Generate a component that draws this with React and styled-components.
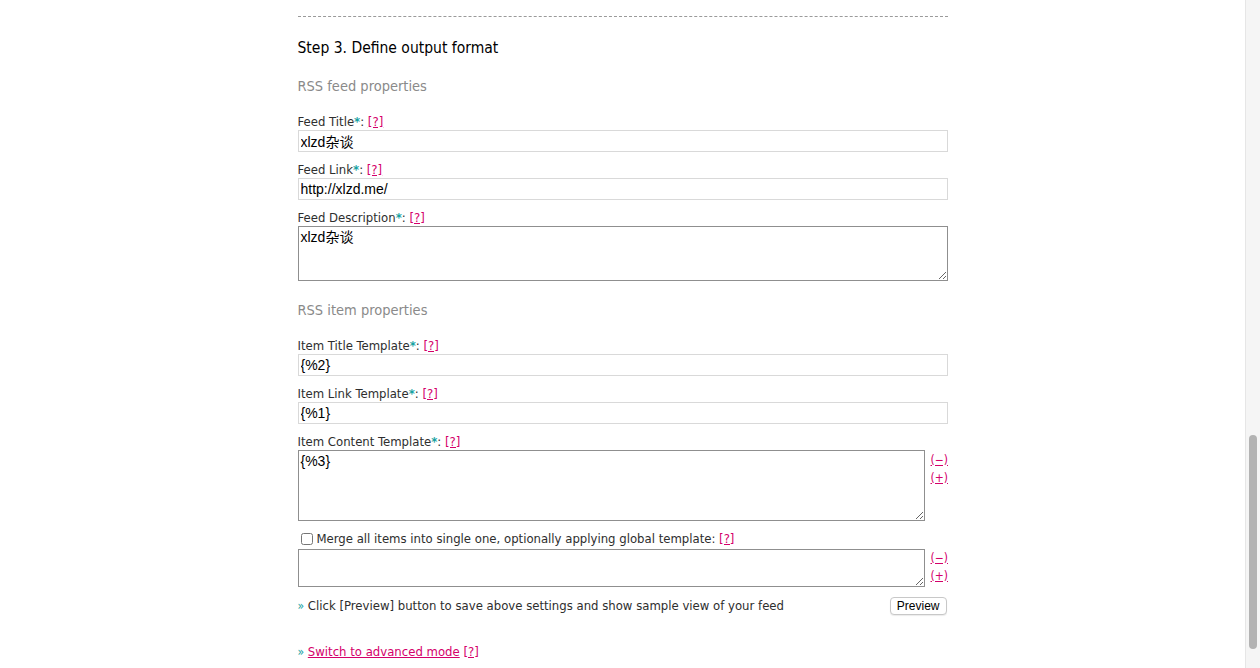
import React from "react";
import styled, { createGlobalStyle } from "styled-components";

const Global = createGlobalStyle`
  html, body { margin: 0; padding: 0; background: #fff; overflow: hidden; }
  body { font-family: Tahoma, "DejaVu Sans Condensed", "DejaVu Sans", sans-serif; color: #2e2e2e; }
`;

const Viewport = styled.div`
  height: 668px;
  padding-right: 15px;
  overflow: hidden;
`;

const Column = styled.div`
  width: 650px;
  margin: 0 auto;
  padding-top: 16px;
  font-size: 13px;
`;

const Divider = styled.hr`
  margin: 0;
  border: 0;
  border-top: 1px dashed #9a9a9a;
`;

const StepTitle = styled.h2`
  margin: 21px 0 0;
  font-size: 15.5px;
  font-weight: normal;
  color: #000;
  line-height: 20px;
`;

const GroupTitle = styled.h3`
  margin: ${(p) => p.$gap || 18}px 0 0;
  font-size: 14.5px;
  font-weight: normal;
  color: #8a8a8a;
  line-height: 20px;
`;

const Field = styled.div`
  margin-top: ${(p) => p.$gap || 9}px;
`;

const Label = styled.label`
  display: block;
  line-height: 17px;
  color: #2e2e2e;
`;

const Req = styled.span`
  color: #17a2a2;
  font-weight: bold;
`;

const Help = styled.a`
  color: #d4006a;
  text-decoration: underline;
`;

const TextInput = styled.input`
  display: block;
  box-sizing: border-box;
  width: 100%;
  height: 22px;
  margin: 0;
  padding: 1px 2px;
  border: 1px solid #d9d9d9;
  font-family: "Liberation Sans", "Noto Sans CJK SC", sans-serif;
  font-size: 14px;
  color: #000;
  background: #fff;
  outline: none;
`;

const TextArea = styled.textarea`
  display: block;
  flex-shrink: 0;
  box-sizing: border-box;
  width: ${(p) => p.$w || "100%"};
  height: ${(p) => p.$h}px;
  margin: 0;
  padding: 2px 2px;
  border: 1px solid #8f8f8f;
  font-family: "Liberation Sans", "Noto Sans CJK SC", sans-serif;
  font-size: 14px;
  line-height: 17px;
  color: #000;
  background: #fff;
  outline: none;
  resize: both;
`;

const AreaRow = styled.div`
  display: flex;
  align-items: flex-start;
  gap: 6px;
`;

const SizeCtl = styled.div`
  display: flex;
  flex-direction: column;
  padding-top: ${(p) => p.$top || 2}px;
  gap: 1px;
`;

const SizeLink = styled.a`
  color: #d4006a;
  font-size: 12px;
  line-height: 17px;
  text-decoration: underline;
`;

const CheckRow = styled.label`
  display: flex;
  align-items: center;
  gap: 4px;
  margin-top: 9px;
  margin-bottom: 2px;
  line-height: 17px;
`;

const Check = styled.input`
  margin: 0 0 0 3px;
  width: 12px;
  height: 12px;
`;

const ActionRow = styled.div`
  display: flex;
  align-items: center;
  justify-content: space-between;
  margin-top: 10px;
`;

const Note = styled.p`
  margin: 0;
  line-height: 17px;
`;

const Mark = styled.span`
  color: #17a2a2;
  font-size: 12px;
`;

const Button = styled.button`
  font-family: "Liberation Sans", sans-serif;
  font-size: 12px;
  height: 18px;
  padding: 0 6px;
  margin-right: 1px;
  border: 1px solid #c8c8c8;
  border-radius: 4px;
  background: #fff;
  color: #000;
  box-shadow: 0 1px 1px rgba(0,0,0,0.08);
`;

const Footer = styled.p`
  margin: 28px 0 0;
  line-height: 17px;
`;

const MainLink = styled.a`
  color: #d4006a;
  text-decoration: underline;
`;

const ScrollTrack = styled.div`
  position: fixed;
  top: 0;
  right: 0;
  width: 15px;
  height: 668px;
  background: #f5f5f5;
  border-left: 1px solid #e6e6e6;
  box-sizing: border-box;
`;

const ScrollThumb = styled.div`
  position: absolute;
  left: 3px;
  width: 8px;
  top: 435px;
  height: 214px;
  border-radius: 4px;
  background: #b3b3b3;
`;

function HelpLink() {
  return <Help href="#">[?]</Help>;
}

function LabelLine({ text }) {
  return (
    <Label>
      {text}
      <Req>*</Req>: <HelpLink />
    </Label>
  );
}

function Resizers({ top }) {
  return (
    <SizeCtl $top={top}>
      <SizeLink href="#">(−)</SizeLink>
      <SizeLink href="#">(+)</SizeLink>
    </SizeCtl>
  );
}

export default function App() {
  return (
    <>
      <Global />
      <Viewport>
        <Column>
          <Divider />
          <StepTitle>Step 3. Define output format</StepTitle>
          <GroupTitle>RSS feed properties</GroupTitle>
          <Field $gap={17}>
            <LabelLine text="Feed Title" />
            <TextInput defaultValue="xlzd杂谈" />
          </Field>
          <Field>
            <LabelLine text="Feed Link" />
            <TextInput defaultValue="http://xlzd.me/" />
          </Field>
          <Field>
            <LabelLine text="Feed Description" />
            <TextArea $h={55} defaultValue="xlzd杂谈" />
          </Field>
          <GroupTitle $gap={19}>RSS item properties</GroupTitle>
          <Field $gap={17}>
            <LabelLine text="Item Title Template" />
            <TextInput defaultValue="{%2}" />
          </Field>
          <Field>
            <LabelLine text="Item Link Template" />
            <TextInput defaultValue="{%1}" />
          </Field>
          <Field>
            <LabelLine text="Item Content Template" />
            <AreaRow>
              <TextArea $w="627px" $h={71} defaultValue="{%3}" />
              <Resizers top={2} />
            </AreaRow>
          </Field>
          <CheckRow>
            <Check type="checkbox" />
            <span>
              Merge all items into single one, optionally applying global template: <HelpLink />
            </span>
          </CheckRow>
          <AreaRow>
            <TextArea $w="627px" $h={38} defaultValue="" />
            <Resizers top={1} />
          </AreaRow>
          <ActionRow>
            <Note>
              <Mark>»</Mark> Click [Preview] button to save above settings and show sample view of your feed
            </Note>
            <Button>Preview</Button>
          </ActionRow>
          <Footer>
            <Mark>»</Mark> <MainLink href="#">Switch to advanced mode</MainLink> <HelpLink />
          </Footer>
        </Column>
      </Viewport>
      <ScrollTrack>
        <ScrollThumb />
      </ScrollTrack>
    </>
  );
}
